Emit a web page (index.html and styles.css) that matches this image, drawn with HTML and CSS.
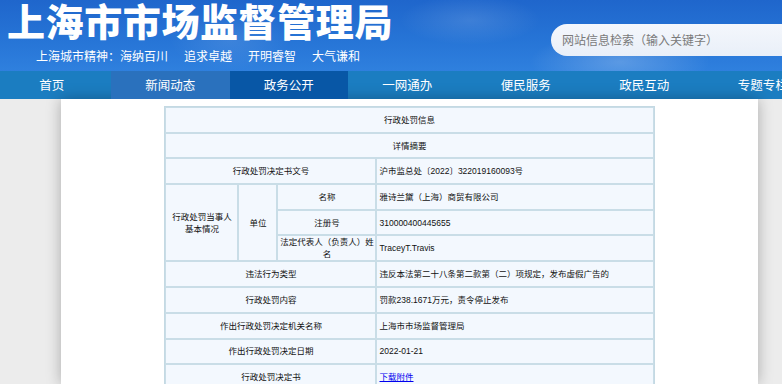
FILE: index.html
```html
<!DOCTYPE html>
<html lang="zh-CN">
<head>
<meta charset="utf-8">
<title>上海市市场监督管理局</title>
<link rel="stylesheet" href="styles.css">
</head>
<body>
<header class="top">
  <div class="brand">
    <h1 class="title">上海市市场监督管理局</h1>
    <p class="motto">上海城市精神：海纳百川<span>追求卓越</span><span>开明睿智</span><span>大气谦和</span></p>
  </div>
  <div class="search">网站信息检索（输入关键字）</div>
</header>
<nav class="nav">
  <a class="nav-item">首页</a>
  <a class="nav-item hover">新闻动态</a>
  <a class="nav-item active">政务公开</a>
  <a class="nav-item">一网通办</a>
  <a class="nav-item">便民服务</a>
  <a class="nav-item">政民互动</a>
  <a class="nav-item">专题专栏</a>
</nav>
<main class="main">
  <div class="page">
    <table class="info">
      <colgroup>
        <col class="c1"><col class="c2"><col class="c3"><col class="c4">
      </colgroup>
      <tr><td colspan="4" class="center">行政处罚信息</td></tr>
      <tr><td colspan="4" class="center">详情摘要</td></tr>
      <tr><td colspan="3" class="center">行政处罚决定书文号</td><td>沪市监总处〔2022〕322019160093号</td></tr>
      <tr>
        <td rowspan="3" class="center">行政处罚当事人<br>基本情况</td>
        <td rowspan="3" class="center">单位</td>
        <td class="center">名称</td>
        <td>雅诗兰黛（上海）商贸有限公司</td>
      </tr>
      <tr><td class="center">注册号</td><td>310000400445655</td></tr>
      <tr><td class="center tight">法定代表人（负责人）姓<br>名</td><td>TraceyT.Travis</td></tr>
      <tr><td colspan="3" class="center">违法行为类型</td><td>违反本法第二十八条第二款第（二）项规定，发布虚假广告的</td></tr>
      <tr><td colspan="3" class="center">行政处罚内容</td><td>罚款238.1671万元，责令停止发布</td></tr>
      <tr><td colspan="3" class="center">作出行政处罚决定机关名称</td><td>上海市市场监督管理局</td></tr>
      <tr><td colspan="3" class="center">作出行政处罚决定日期</td><td>2022-01-21</td></tr>
      <tr><td colspan="3" class="center">行政处罚决定书</td><td><a class="link" href="#">下载附件</a></td></tr>
    </table>
  </div>
</main>
</body>
</html>
```
FILE: styles.css
```css
html, body {
  margin: 0;
  padding: 0;
}
body {
  width: 782px;
  height: 384px;
  overflow: hidden;
  background: #ececec;
  font-family: "Liberation Sans", "Noto Sans CJK SC", sans-serif;
}
.top {
  height: 71px;
  display: flex;
  background:
    radial-gradient(ellipse 90px 30px at 620px 62px, rgba(255,255,255,0.22), rgba(255,255,255,0) 100%),
    radial-gradient(ellipse 70px 25px at 470px 20px, rgba(255,255,255,0.12), rgba(255,255,255,0) 100%),
    radial-gradient(ellipse 60px 30px at 230px 40px, rgba(255,255,255,0.10), rgba(255,255,255,0) 100%),
    linear-gradient(180deg, #1f66cc 0%, #2674d6 55%, #2f80de 100%);
  color: #fff;
}
.brand {
  padding-left: 7px;
}
.title {
  margin: 0;
  font-family: "Noto Sans CJK SC", sans-serif;
  font-weight: 900;
  font-size: 38px;
  letter-spacing: 0.6px;
  line-height: 40px;
  height: 42px;
}
.motto {
  margin: 6px 0 0 29px;
  font-family: "Noto Sans CJK SC", sans-serif;
  font-size: 12px;
  line-height: 16px;
}
.motto span {
  margin-left: 16px;
}
.search {
  margin-left: auto;
  margin-top: 24px;
  margin-right: -20px;
  width: 251px;
  height: 32px;
  box-sizing: border-box;
  border-radius: 16px;
  background: linear-gradient(180deg, #f4f7fc, #e9eff8);
  color: #7a7a7a;
  font-family: "Noto Sans CJK SC", sans-serif;
  font-size: 12px;
  line-height: 32px;
  padding-left: 11px;
}
.nav {
  display: flex;
  height: 28px;
  margin-left: -7.5px;
  background: #1b7dc1;
}
.nav-item {
  flex: none;
  width: 118.5px;
  text-align: center;
  color: #fff;
  font-family: "Noto Sans CJK SC", sans-serif;
  font-size: 12.5px;
  line-height: 28px;
}
.nav-item.hover {
  background: #2a71bd;
}
.nav-item.active {
  background: #0857a6;
}
.main {
  height: 285px;
  background: #ececec;
}
.page {
  width: 697px;
  height: 100%;
  margin-left: 61px;
  background: #fff;
  box-shadow: 0 0 14px rgba(0, 0, 0, 0.28);
  padding-top: 7px;
  box-sizing: border-box;
}
.info {
  width: 490px;
  margin: 0 auto;
  table-layout: fixed;
  border-collapse: separate;
  border-spacing: 0;
  border: 1px solid #c4d9e3;
  background: #f3f8fe;
  font-size: 8.5px;
  color: #111;
}
.c1 { width: 73px; }
.c2 { width: 39px; }
.c3 { width: 99px; }
.c4 { width: 277px; }
.info td {
  box-sizing: border-box;
  height: 25.7px;
  border: 1px solid #c9dde7;
  padding: 0 2px;
  line-height: 12px;
  text-align: left;
  vertical-align: middle;
}
.info td.center {
  text-align: center;
}
.info td.tight {
  padding: 0 1px;
  white-space: nowrap;
}
.link {
  color: #0000ee;
  text-decoration: underline;
}
```
